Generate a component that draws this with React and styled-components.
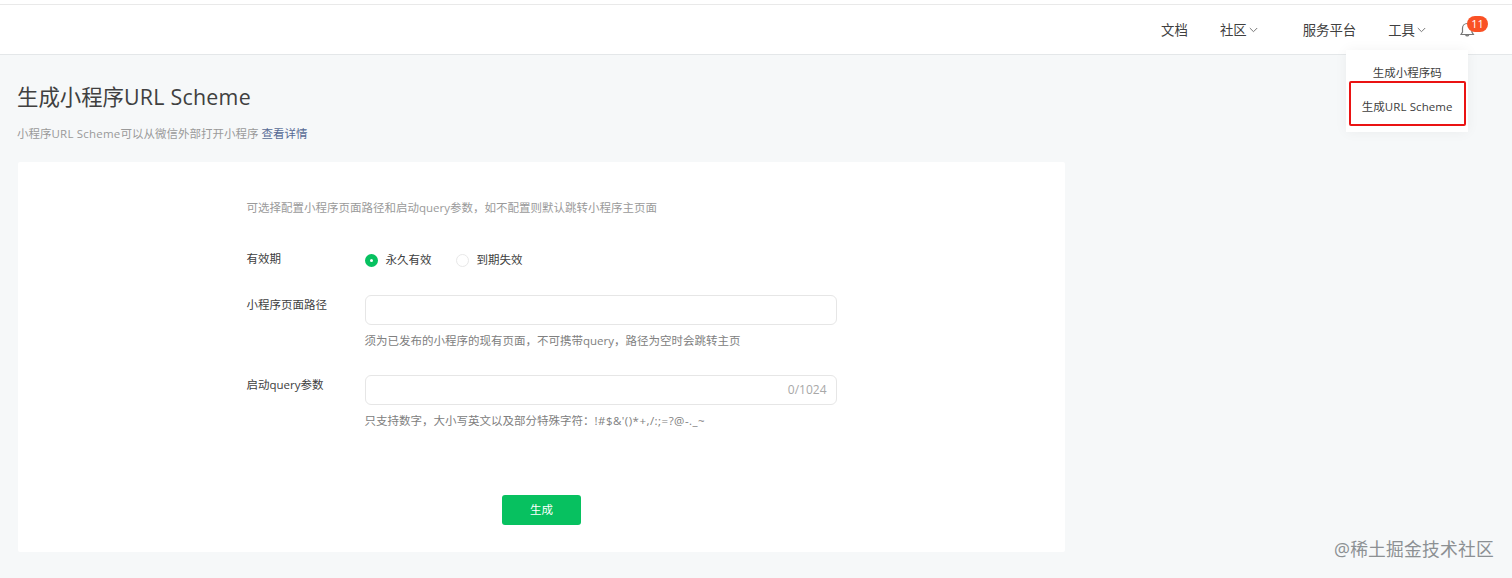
import React, { useState } from 'react';
import styled, { createGlobalStyle } from 'styled-components';

const GlobalStyle = createGlobalStyle`
  * {
    box-sizing: border-box;
  }
  body {
    margin: 0;
    background: #f6f8f9;
    color: #404040;
    font-family: "Open Sans", "Noto Sans CJK SC", sans-serif;
    font-size: 11.5px;
    line-height: 18px;
    overflow: hidden;
  }
`;

const Page = styled.div`
  position: relative;
  height: 578px;
`;

const Latin = styled.span`
  letter-spacing: ${({ $space }) => $space}px;
`;

const Header = styled.header`
  display: flex;
  justify-content: flex-end;
  align-items: center;
  height: 55px;
  padding: 5px 24px 0 0;
  background: linear-gradient(#fff 4px, #e9e9e9 4px, #e9e9e9 5px, #fff 5px);
  border-bottom: 1px solid #e4e7e9;
`;

const NavItem = styled.div`
  position: relative;
  display: flex;
  align-items: center;
  height: 20px;
  margin-right: ${({ $gap }) => $gap}px;
  font-size: 13.4px;
  line-height: 20px;
  white-space: nowrap;
`;

const Arrow = styled.svg`
  width: 9px;
  height: 6px;
  margin-left: 2px;
  fill: none;
  stroke: #777;
`;

const Menu = styled.div`
  position: absolute;
  top: 30px;
  left: -42px;
  z-index: 2;
  display: flex;
  flex-direction: column;
  align-items: center;
  width: 122px;
  height: 82px;
  padding-top: 14px;
  background: #fff;
  box-shadow: 0 0 12px rgba(0, 0, 0, 0.05);
  font-size: 11.5px;
`;

const MenuItem = styled.div`
  height: 17px;
  line-height: 18px;
`;

const ActiveItem = styled.div`
  display: flex;
  align-items: center;
  justify-content: center;
  width: 117px;
  height: 45px;
  padding-top: 8px;
  border: 2px solid #ea1313;
  border-radius: 2px;
`;

const Bell = styled.div`
  position: relative;
  width: 28px;
  height: 18px;
`;

const BellIcon = styled.svg`
  display: block;
  width: 15px;
  height: 17px;
  fill: none;
  stroke: #777;
  stroke-width: 1.2;
`;

const Badge = styled.span`
  position: absolute;
  top: -5px;
  left: 7px;
  width: 21px;
  height: 16px;
  border-radius: 8px;
  background: #fa5125;
  color: #fff;
  font-size: 11px;
  line-height: 16px;
  text-align: center;
`;

const Main = styled.main`
  width: 1065px;
  padding: 27px 0 0 17px;
`;

const Title = styled.h1`
  margin: 0;
  font-size: 21.4px;
  font-weight: 400;
  line-height: 30px;
`;

const Desc = styled.p`
  margin: 13px 0 0;
  color: #9a9a9a;
`;

const Link = styled.a`
  margin-left: 3px;
  color: #576b95;
`;

const Card = styled.section`
  height: 390px;
  margin: 19px 0 0 1px;
  padding: 37px 228px 0 228.5px;
  background: #fff;
  border-radius: 2px;
`;

const Intro = styled.p`
  margin: 0;
  color: #9a9a9a;
`;

const Row = styled.div`
  display: flex;
  margin-top: ${({ $top }) => $top}px;
`;

const Label = styled.div`
  width: 118px;
  flex: none;
  padding-top: 1px;
`;

const Field = styled.div`
  flex: none;
  width: 472px;
`;

const Radios = styled.div`
  display: flex;
  gap: 24px;
  padding-top: 2px;
`;

const Radio = styled.label`
  display: flex;
  align-items: center;
  height: 18px;
`;

const Dot = styled.span`
  width: 13px;
  height: 13px;
  margin-right: 8px;
  border: ${({ $on }) => ($on ? '5px solid #07c160' : '1px solid #e8e8e8')};
  border-radius: 50%;
  background: #fff;
`;

const InputBox = styled.div`
  display: flex;
  align-items: center;
  height: 30px;
  padding: 0 9px;
  border: 1px solid #e6e6e6;
  border-radius: 6px;
`;

const Input = styled.input`
  flex: 1;
  min-width: 0;
  padding: 0;
  border: 0;
  outline: 0;
  background: none;
  font: inherit;
`;

const Counter = styled.span`
  color: #a8a8a8;
  font-size: 12px;
`;

const Tip = styled.p`
  margin: 7px 0 0;
  color: #808080;
`;

const Submit = styled.button`
  display: block;
  width: 79px;
  height: 30px;
  margin: 65px 0 0 255.5px;
  padding: 0;
  border: 0;
  border-radius: 3px;
  background: #07c160;
  color: #fff;
  font: inherit;
`;

const Watermark = styled.div`
  position: absolute;
  right: 18px;
  bottom: 16px;
  color: #8c9093;
  font-size: 17.8px;
  line-height: 26px;
  letter-spacing: 0.2px;
  white-space: nowrap;
`;

function Chevron() {
  return (
    <Arrow viewBox="0 0 9 6">
      <path d="M0.8 1l3.7 3.7L8.2 1" />
    </Arrow>
  );
}

function TopBar() {
  return (
    <Header>
      <NavItem $gap={32}>文档</NavItem>
      <NavItem $gap={45}>
        社区
        <Chevron />
      </NavItem>
      <NavItem $gap={32}>服务平台</NavItem>
      <NavItem $gap={34}>
        工具
        <Chevron />
        <Menu>
          <MenuItem>生成小程序码</MenuItem>
          <ActiveItem>
            生成
            <Latin $space={0.1}>URL Scheme</Latin>
          </ActiveItem>
        </Menu>
      </NavItem>
      <Bell>
        <BellIcon viewBox="0 0 15 17">
          <path d="M1 13.5h12.4L11.9 11V7.2a4.7 4.7 0 0 0-9.4 0V11L1 13.5zM5.6 13.8a1.7 1.7 0 0 0 3.2 0" />
        </BellIcon>
        <Badge>11</Badge>
      </Bell>
    </Header>
  );
}

export default function App() {
  const [forever, setForever] = useState(true);
  const [path, setPath] = useState('');
  const [query, setQuery] = useState('');

  return (
    <Page>
      <GlobalStyle />
      <TopBar />
      <Main>
        <Title>
          生成小程序
          <Latin $space={0.25}>URL Scheme</Latin>
        </Title>
        <Desc>
          小程序
          <Latin $space={0.2}>URL Scheme</Latin>
          可以从微信外部打开小程序
          <Link>查看详情</Link>
        </Desc>
        <Card>
          <Intro>可选择配置小程序页面路径和启动query参数，如不配置则默认跳转小程序主页面</Intro>
          <Row $top={32}>
            <Label>有效期</Label>
            <Radios>
              <Radio onClick={() => setForever(true)}>
                <Dot $on={forever} />
                永久有效
              </Radio>
              <Radio onClick={() => setForever(false)}>
                <Dot $on={!forever} />
                到期失效
              </Radio>
            </Radios>
          </Row>
          <Row $top={26}>
            <Label>小程序页面路径</Label>
            <Field>
              <InputBox>
                <Input value={path} onChange={(e) => setPath(e.target.value)} />
              </InputBox>
              <Tip>须为已发布的小程序的现有页面，不可携带query，路径为空时会跳转主页</Tip>
            </Field>
          </Row>
          <Row $top={25}>
            <Label>启动query参数</Label>
            <Field>
              <InputBox>
                <Input value={query} onChange={(e) => setQuery(e.target.value)} />
                <Counter>{`${query.length}/1024`}</Counter>
              </InputBox>
              <Tip>
                只支持数字，大小写英文以及部分特殊字符：
                <Latin $space={0.48}>{'!#$&\'()*+,/:;=?@-._~'}</Latin>
              </Tip>
            </Field>
          </Row>
          <Submit type="button">生成</Submit>
        </Card>
      </Main>
      <Watermark>@稀土掘金技术社区</Watermark>
    </Page>
  );
}
